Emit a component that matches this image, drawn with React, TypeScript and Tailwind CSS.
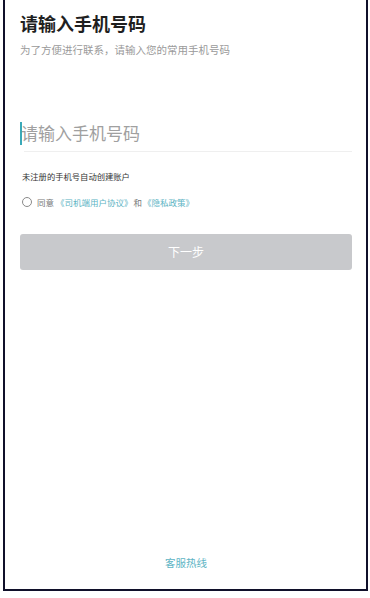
import React from 'react'

const font = { fontFamily: '"Noto Sans CJK SC", "Noto Sans", sans-serif' }

export default function App(): React.JSX.Element {
  return (
    <div className="w-[370px] h-[598px] bg-white" style={font}>
      <div className="ml-[3px] w-[365px] h-[591px] border-x-2 border-b-2 border-[#10102a] flex flex-col pl-[15px] pr-[14px]">
        <h1 className="pt-[11px] text-[18px] leading-[24px] font-bold text-[#1f1f1f]">请输入手机号码</h1>
        <p className="mt-[8px] text-[10.5px] leading-[14px] text-[#9a9a9a]">为了方便进行联系，请输入您的常用手机号码</p>

        <div className="mt-[60px] h-[36px] flex flex-col">
          <div className="flex items-center h-[32px]">
            <span className="w-[1.5px] h-[23px] bg-[#3aa9b8]" />
            <span className="-ml-[0.5px] text-[17px] leading-[32px] text-[#a0a0a0]">请输入手机号码</span>
          </div>
          <div className="ml-[4px] mt-auto mb-[1px] h-px bg-[#efefef]" />
        </div>

        <p className="mt-[17px] ml-[2px] text-[8.3px] leading-[12px] text-[#333]">未注册的手机号自动创建账户</p>

        <div className="mt-[14px] ml-[2px] flex items-center h-[12px] text-[8.5px] leading-[12px]">
          <span className="w-[10px] h-[10px] rounded-full border border-[#8a8a8a]" />
          <span className="ml-[5px] text-[#777]">同意</span>
          <span className="ml-[2px] text-[#5db4c4]">《司机端用户协议》</span>
          <span className="ml-[1px] text-[#777]">和</span>
          <span className="ml-[1px] text-[#5db4c4]">《隐私政策》</span>
        </div>

        <button
          type="button"
          className="mt-[26px] h-[36px] w-full rounded-[3px] bg-[#c8c9cc] text-white text-[12px]"
        >
          下一步
        </button>

        <p className="mt-auto pb-[19px] text-center text-[10.5px] leading-[14px] text-[#5db4c4]">客服热线</p>
      </div>
    </div>
  )
}
